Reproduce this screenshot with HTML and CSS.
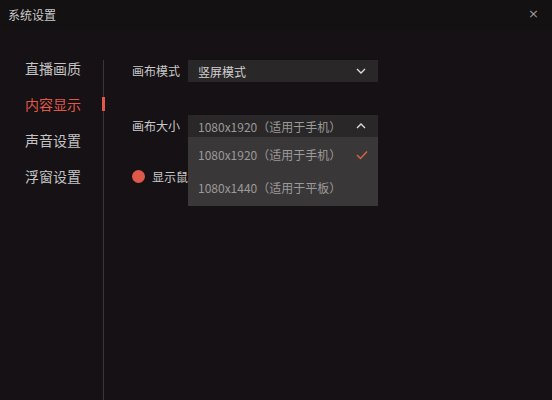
FILE: index.html
```html
<!DOCTYPE html>
<html lang="zh-CN">
<head>
    <meta charset="UTF-8">
    <title>系统设置</title>
    <link rel="stylesheet" href="styles.css">
</head>
<body>
    <div class="window">
        <header class="titlebar">
            <span class="title">系统设置</span>
            <span class="close">×</span>
        </header>
        <div class="body">
            <nav class="sidebar">
                <a class="nav-item">直播画质</a>
                <a class="nav-item active">内容显示</a>
                <a class="nav-item">声音设置</a>
                <a class="nav-item">浮窗设置</a>
            </nav>
            <section class="content">
                <div class="row">
                    <label>画布模式</label>
                    <div class="select">
                        <span>竖屏模式</span>
                        <svg class="chev" width="10" height="6" viewBox="0 0 10 6"><path d="M1 1l4 4 4-4" fill="none" stroke="#ddd" stroke-width="1.3"/></svg>
                    </div>
                </div>
                <div class="row size-row">
                    <label>画布大小</label>
                    <div class="select-wrap">
                        <div class="select open">
                            <span>1080x1920（适用于手机）</span>
                            <svg class="chev" width="10" height="6" viewBox="0 0 10 6"><path d="M1 5l4-4 4 4" fill="none" stroke="#ddd" stroke-width="1.3"/></svg>
                        </div>
                        <ul class="dropdown">
                            <li class="selected">
                                <span>1080x1920（适用于手机）</span>
                                <svg width="12" height="10" viewBox="0 0 12 10"><path d="M1 5l3.5 3.5L11 1.5" fill="none" stroke="#d9653f" stroke-width="1.4"/></svg>
                            </li>
                            <li><span>1080x1440（适用于平板）</span></li>
                        </ul>
                    </div>
                </div>
                <div class="row check-row">
                    <span class="radio"></span>
                    <span class="check-label">显示鼠标</span>
                </div>
            </section>
        </div>
    </div>
</body>
</html>
```

FILE: styles.css
```css
* {
    box-sizing: border-box;
    font-family: "Noto Sans CJK SC", "Noto Sans", sans-serif;
}

body {
    margin: 0;
    background: #151114;
    width: 552px;
    height: 400px;
    overflow: hidden;
}

.window {
    height: 400px;
    display: flex;
    flex-direction: column;
}

.titlebar {
    height: 30px;
    display: flex;
    justify-content: space-between;
    align-items: center;
    padding: 0 13px 0 8px;
    background: #141112;

    .title {
        color: #c8c8c8;
        font-size: 12px;
        margin-top: -2px;
    }

    .close {
        color: #9a9a9a;
        font-size: 13px;
        font-family: "DejaVu Sans", sans-serif;
        margin-top: -4px;
    }
}

.body {
    flex: 1;
    display: flex;
    padding-top: 30px;
}

.sidebar {
    width: 104px;
    border-right: 1px solid #3a3638;
    display: flex;
    flex-direction: column;

    .nav-item {
        position: relative;
        height: 36px;
        line-height: 20px;
        padding-left: 25px;
        color: #c4c4c4;
        font-size: 14px;
        margin-top: -2px;
        margin-bottom: 2px;
    }

    .nav-item.active {
        color: #e0584a;
    }

    .nav-item.active::after {
        content: "";
        position: absolute;
        right: -2px;
        top: 3px;
        width: 3px;
        height: 14px;
        background: #e0584a;
    }
}

.content {
    flex: 1;
    padding-left: 28px;
}

.row {
    display: flex;
    align-items: flex-start;
    margin-bottom: 33px;

    label {
        width: 56px;
        font-size: 12px;
        line-height: 22px;
        color: #c8c8c8;
    }
}

.select-wrap {
    position: relative;
}

.select {
    width: 190px;
    height: 22px;
    background: #2a2728;
    display: flex;
    justify-content: space-between;
    align-items: center;
    padding: 0 12px 0 10px;
    font-size: 12px;
    color: #d0d0d0;

    &.open {
        color: #9a9a9a;
    }
}

.dropdown {
    position: absolute;
    left: 0;
    top: 22px;
    width: 190px;
    margin: 0;
    padding: 0;
    list-style: none;
    background: #3a3738;
    z-index: 2;

    li {
        height: 37px;
        display: flex;
        justify-content: space-between;
        align-items: center;
        padding: 0 10px;
        font-size: 12px;
        color: #9a9a9a;
    }

    li.selected {
        height: 32px;
        padding-top: 3px;
    }
}

.check-row {
    align-items: center;
    margin-top: -2px;

    .radio {
        width: 13px;
        height: 13px;
        border-radius: 50%;
        background: #e0584a;
        margin-right: 7px;
    }

    .check-label {
        color: #c8c8c8;
        font-size: 12px;
    }
}
```
